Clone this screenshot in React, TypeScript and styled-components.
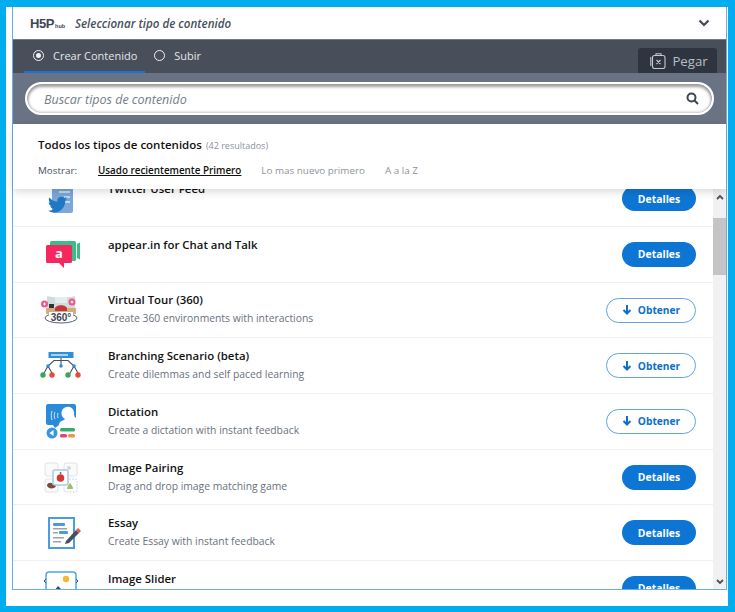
import styled, { createGlobalStyle } from "styled-components";

const Global = createGlobalStyle`
  html, body { margin: 0; padding: 0; background: #fff; }
  * { box-sizing: border-box; }
  body { font-family: "Open Sans", "Liberation Sans", sans-serif; color: #212121; }
`;

const Screen = styled.div`
  width: 735px;
  height: 612px;
  border: solid #00aef0;
  border-width: 7px 7px 6px 6px;
  background: #fff;
  padding: 0 1px 16px 6px;
  overflow: hidden;
`;

const Hub = styled.div`
  height: 583px;
  border: solid #6aaee4;
  border-width: 0 1px 1px 1px;
  display: flex;
  flex-direction: column;
  position: relative;
`;

const Header = styled.header`
  height: 32px;
  flex: none;
  background: #fff;
  display: flex;
  align-items: center;
  padding: 0 16px 0 17px;
`;

const Logo = styled.div`
  width: 45px;
  font-family: "Liberation Sans", sans-serif;
  font-weight: 700;
  font-size: 13px;
  letter-spacing: -0.4px;
  color: #3d4654;
  white-space: nowrap;
  span {
    font-size: 5.5px;
    letter-spacing: 0;
    margin-left: 1px;
  }
`;

const HeaderTitle = styled.div`
  flex: 1;
  font-size: 11.6px;
  font-style: italic;
  font-weight: 600;
  color: #47505e;
`;

const Tabs = styled.nav`
  height: 34px;
  flex: none;
  background: #484f5b;
  border-top: 1px solid #727986;
  display: flex;
  align-items: stretch;
  padding: 0 9px 0 11px;
`;

const Tab = styled.div<{ $active?: boolean }>`
  display: flex;
  align-items: center;
  gap: 9px;
  padding: 0 8px 0 9px;
  font-size: 11px;
  color: #e3e6ea;
  border-bottom: 2px solid ${(p) => (p.$active ? "#1a73d9" : "transparent")};
`;

const Radio = styled.span<{ $on?: boolean }>`
  width: 11px;
  height: 11px;
  border-radius: 50%;
  border: 1.5px solid #f0f2f4;
  display: flex;
  align-items: center;
  justify-content: center;
  &::after {
    content: "";
    width: 5px;
    height: 5px;
    border-radius: 50%;
    background: ${(p) => (p.$on ? "#f0f2f4" : "transparent")};
  }
`;

const PasteButton = styled.div`
  margin-left: auto;
  align-self: flex-end;
  width: 79px;
  height: 25px;
  background: #2f3540;
  border-radius: 3px 3px 0 0;
  color: #b9bec6;
  font-size: 13.2px;
  display: flex;
  align-items: center;
  justify-content: center;
  gap: 6px;
  padding: 1px 0 0 3px;
`;

const SearchBar = styled.div`
  height: 51px;
  flex: none;
  background: #697384;
  padding: 9px 12px 9px 12px;
`;

const SearchBox = styled.div`
  height: 33px;
  border-radius: 17px;
  border: 2px solid #fff;
  background: #fff;
  box-shadow: inset 0 2px 3px 1px rgba(0, 0, 0, 0.38), inset 0 -1px 3px rgba(0, 0, 0, 0.18);
  display: flex;
  align-items: center;
  justify-content: space-between;
  padding: 0 13px 0 17px;
`;

const Placeholder = styled.span`
  font-size: 12.5px;
  font-style: italic;
  color: #747c88;
  padding-top: 1px;
`;

const Filters = styled.section`
  height: 65px;
  flex: none;
  background: #fff;
  padding: 12px 25px 0;
  box-shadow: 0 3px 8px rgba(0, 0, 0, 0.14);
  position: relative;
  z-index: 1;
`;

const FiltersTitle = styled.div`
  font-size: 11.5px;
  font-weight: 600;
  color: #111;
  line-height: 18px;
  small {
    font-size: 9px;
    font-weight: 400;
    color: #8b919a;
    margin-left: 1px;
  }
`;

const FilterRow = styled.div`
  display: flex;
  margin-top: 8px;
  font-size: 9.85px;
  line-height: 15px;
  color: #8e939b;
`;

const FilterLabel = styled.span`
  width: 60px;
  color: #47505e;
`;

const FilterOption = styled.span<{ $active?: boolean }>`
  margin-right: 20px;
  color: ${(p) => (p.$active ? "#111" : "#8e939b")};
  font-weight: ${(p) => (p.$active ? 600 : 400)};
  text-decoration: ${(p) => (p.$active ? "underline" : "none")};
`;

const Body = styled.div`
  flex: 1;
  min-height: 0;
  display: flex;
  overflow: hidden;
`;

const List = styled.div`
  flex: 1;
  min-width: 0;
  overflow: hidden;
`;

const Rows = styled.div`
  margin-top: -17.7px;
`;

const Row = styled.div`
  height: 55.7px;
  border-bottom: 1px solid #eeeff1;
  display: flex;
  align-items: center;
  padding: 0 17px 0 27px;
`;

const IconCell = styled.div`
  width: 42px;
  height: 42px;
  flex: none;
  margin-right: 26px;
  display: flex;
  align-items: center;
  justify-content: center;
`;

const RowText = styled.div`
  flex: 1;
  align-self: flex-start;
  padding-top: 8.8px;
`;

const RowTitle = styled.div`
  font-size: 11.4px;
  font-weight: 600;
  line-height: 17px;
  color: #111;
`;

const RowDesc = styled.div`
  font-size: 10.35px;
  line-height: 15px;
  margin-top: 3px;
  color: #69717d;
`;

const DetailsButton = styled.div`
  width: 74px;
  height: 25px;
  border-radius: 13px;
  background: #0d76d4;
  color: #fff;
  font-size: 10.4px;
  font-weight: 700;
  display: flex;
  align-items: center;
  justify-content: center;
`;

const GetButton = styled.div`
  width: 90px;
  height: 25px;
  border-radius: 13px;
  border: 1px solid #5fa4e3;
  background: #fff;
  color: #0d6fc9;
  font-size: 10.2px;
  font-weight: 700;
  display: flex;
  align-items: center;
  justify-content: center;
  gap: 6px;
`;

const Scrollbar = styled.div`
  width: 13px;
  flex: none;
  background: #f1f1f1;
  display: flex;
  flex-direction: column;
  padding-top: 5px;
  align-items: center;
`;

const Arrow = styled.svg`
  flex: none;
`;

const Thumb = styled.div`
  width: 13px;
  height: 57px;
  margin-top: 18px;
  background: #c4c4c4;
`;

const ArrowBottom = styled(Arrow)`
  margin-top: auto;
  margin-bottom: 4px;
`;

const TWITTER =
  "M23.953 4.57a10 10 0 01-2.825.775 4.958 4.958 0 002.163-2.723c-.951.555-2.005.959-3.127 1.184a4.92 4.92 0 00-8.384 4.482C7.69 8.095 4.067 6.13 1.64 3.162a4.822 4.822 0 00-.666 2.475c0 1.71.87 3.213 2.188 4.096a4.904 4.904 0 01-2.228-.616v.06a4.923 4.923 0 003.946 4.827 4.996 4.996 0 01-2.212.085 4.936 4.936 0 004.604 3.417 9.867 9.867 0 01-6.102 2.105c-.39 0-.779-.023-1.17-.067a13.995 13.995 0 007.557 2.209c9.053 0 13.998-7.496 13.998-13.985 0-.21 0-.42-.015-.63A9.935 9.935 0 0024 4.59z";

const Tw = () => (
  <svg width="30" height="36" viewBox="0 0 30 36">
    <rect x="6" y="1" width="21" height="31" rx="2" fill="#7ba7da" />
    <path d="M10 6h14M13 11h11M18 16h6M19 21h5" stroke="#dce8f6" strokeWidth="1.600" />
    <g transform="translate(2 14) scale(0.8)">
      <path d={TWITTER} fill="#1f78c4" />
    </g>
  </svg>
);

const Appear = () => (
  <svg width="41" height="29" viewBox="-5 0 41 29">
    <rect x="4" y="1" width="26" height="20" rx="1.500" fill="#3bbd88" />
    <path d="M31 4l3-1.500v17L31 18z" fill="#3bbd88" />
    <path d="M1.500 5h23a1.500 1.500 0 0 1 1.500 1.500v15a1.500 1.500 0 0 1-1.500 1.500H18v5l-5-5H1.500A1.500 1.500 0 0 1 0 21.500v-15A1.500 1.500 0 0 1 1.500 5z" fill="#f4285e" />
    <text x="13" y="18" textAnchor="middle" fontFamily="Open Sans" fontWeight="700" fontSize="13" fill="#fff">a</text>
  </svg>
);

const Tour = () => (
  <svg width="40" height="28" viewBox="0 0 40 28">
    <path d="M6 0c9 2 19 2 28 0v14H6z" fill="#cfdcdc" />
    <rect x="14" y="2" width="12" height="5" fill="#e4ecec" />
    <rect x="5" y="12" width="30" height="6" fill="#d3ac80" />
    <path d="M14 13c0-5 12-5 12 0v2H14z" fill="#c5343f" />
    <rect x="8" y="8" width="5" height="4" fill="#333" />
    <circle cx="3.500" cy="8" r="3.500" fill="#f0548a" />
    <circle cx="31" cy="6" r="3.500" fill="#f0548a" />
    <path d="M2 8h3M3.500 6.500v3M29.500 6h3M31 4.500v3" stroke="#fff" strokeWidth="1" />
    <ellipse cx="20" cy="22" rx="16" ry="5" fill="none" stroke="#55606e" strokeWidth="1" />
    <rect x="8" y="16" width="24" height="9" fill="#fff" />
    <text x="20" y="24.500" textAnchor="middle" fontFamily="Liberation Sans" fontWeight="700" fontSize="10" fill="#3d4654">360°</text>
  </svg>
);

const Branch = () => (
  <svg width="42" height="27" viewBox="0 0 42 27">
    <rect x="8.500" y="0" width="25" height="6" fill="#2f8fd8" />
    <rect x="11" y="2" width="17" height="2" fill="#a7d3f2" />
    <path d="M21 6v8M21 8.500H14L8 14 3.500 22M21 8.500h7L34 14l4.500 8M8 14l4.500 8M34 14l-4.500 8" stroke="#47505e" strokeWidth="1.100" fill="none" />
    <circle cx="8" cy="14" r="1.800" fill="#2f8fd8" />
    <circle cx="21" cy="14" r="1.800" fill="#2f8fd8" />
    <circle cx="34" cy="14" r="1.800" fill="#2f8fd8" />
    <circle cx="3" cy="23" r="2.700" fill="#3aa655" />
    <circle cx="12" cy="23" r="2.700" fill="#e84b3c" />
    <circle cx="28" cy="23" r="2.700" fill="#3aa655" />
    <circle cx="38" cy="23" r="2.700" fill="#e84b3c" />
  </svg>
);

const Dictation = () => (
  <svg width="30" height="36" viewBox="0 0 30 36">
    <path d="M2 1h26a2 2 0 0 1 2 2v17a2 2 0 0 1-2 2H13l-4 3-2-3H2a2 2 0 0 1-2-2V3a2 2 0 0 1 2-2z" fill="#2a8bd8" />
    <path d="M13 22c0-4 4-4 6-6-4-2-5-8-1-11 5-3 10 0 10 5 0 2 0 4 2 5v7z" fill="#fff" />
    <path d="M6 8c-1 3-1 6 0 9M9 9c-1 2-1 5 0 7M12 10c-.5 1.500-.5 3.500 0 5" stroke="#cfe6f7" strokeWidth="1" fill="none" />
    <circle cx="6" cy="30" r="5.500" fill="#3a97dd" />
    <path d="M3.500 30l4-3v6z" fill="#fff" />
    <rect x="14" y="25" width="15" height="3.500" rx="1.500" fill="#3aa96f" />
    <rect x="14" y="31" width="7" height="3.500" rx="1.500" fill="#e0457a" />
    <rect x="22" y="31" width="7" height="3.500" rx="1.500" fill="#e8954b" />
  </svg>
);

const Pairing = () => (
  <svg width="34" height="31" viewBox="0 0 34 31">
    <rect x="1" y="1" width="13" height="13" rx="2" fill="#fafafa" stroke="#e0e2e5" />
    <rect x="20" y="1" width="13" height="13" rx="2" fill="#fafafa" stroke="#e0e2e5" />
    <rect x="1" y="17" width="13" height="13" rx="2" fill="#fafafa" stroke="#e0e2e5" />
    <rect x="20" y="17" width="13" height="13" rx="2" fill="#fff" stroke="#c4d8f0" strokeDasharray="2 1" />
    <path d="M3 23c1-3 6-3 6 0 3-1 4 2 1 3-3 1-7 0-7-3z" fill="#7a4c32" />
    <path d="M23 27c0-3 2-5 3-6 1 1 3 3 3 6z" fill="#9cc46c" />
    <circle cx="25" cy="6" r="2" fill="#d6d6d6" />
    <rect x="9" y="8" width="15" height="15" rx="2" fill="#fff" stroke="#a9c8ea" strokeWidth="1.500" />
    <circle cx="16.500" cy="16" r="3.800" fill="#d93636" />
    <path d="M16.500 12v-2" stroke="#4b8b3b" strokeWidth="1.500" />
  </svg>
);

const Essay = () => (
  <svg width="39" height="32" viewBox="-6 0 39 32">
    <rect x="1" y="1" width="25" height="30" fill="#fff" stroke="#4e9ade" strokeWidth="2" />
    <rect x="5" y="6" width="12" height="3" rx="1" fill="#4e9ade" />
    <rect x="5" y="11" width="14" height="1.500" fill="#9aa3ae" />
    <rect x="11" y="14" width="9" height="3" rx="1" fill="#4e9ade" />
    <rect x="5" y="15" width="5" height="1.500" fill="#9aa3ae" />
    <rect x="5" y="20" width="11" height="1.500" fill="#9aa3ae" />
    <rect x="5" y="24" width="8" height="1.500" fill="#9aa3ae" />
    <path d="M18 24l10-11 3 3-10 10-4 1z" fill="#47505e" />
    <path d="M28 13l2-2 3 3-2 2z" fill="#e0564f" />
  </svg>
);

const Slider = () => (
  <svg width="34" height="34" viewBox="0 0 34 34">
    <rect x="2" y="1" width="30" height="30" rx="3" fill="#fff" stroke="#4ea6e6" strokeWidth="1.500" />
    <circle cx="22" cy="8" r="3.200" fill="#f7b733" />
    <path d="M7 24l7-9 9 9z" fill="#2d4a6b" />
    <path d="M2 8l-2 2 2 2M32 8l2 2-2 2" stroke="#47505e" fill="none" />
  </svg>
);

const items = [
  { title: "Twitter User Feed", icon: <Tw />, action: "details" },
  { title: "appear.in for Chat and Talk", icon: <Appear />, action: "details" },
  { title: "Virtual Tour (360)", desc: "Create 360 environments with interactions", icon: <Tour />, action: "get" },
  { title: "Branching Scenario (beta)", desc: "Create dilemmas and self paced learning", icon: <Branch />, action: "get" },
  { title: "Dictation", desc: "Create a dictation with instant feedback", icon: <Dictation />, action: "get" },
  { title: "Image Pairing", desc: "Drag and drop image matching game", icon: <Pairing />, action: "details" },
  { title: "Essay", desc: "Create Essay with instant feedback", icon: <Essay />, action: "details" },
  { title: "Image Slider", desc: "Easily create an Image Slider", icon: <Slider />, action: "details" },
];

function App() {
  return (
    <>
      <Global />
      <Screen>
        <Hub>
          <Header>
            <Logo>
              H5P<span>hub</span>
            </Logo>
            <HeaderTitle>Seleccionar tipo de contenido</HeaderTitle>
            <svg width="12" height="8" viewBox="0 0 12 8">
              <path d="M1.500 1.500L6 6l4.500-4.500" fill="none" stroke="#3d4654" strokeWidth="2.200" />
            </svg>
          </Header>
          <Tabs>
            <Tab $active>
              <Radio $on />
              Crear Contenido
            </Tab>
            <Tab>
              <Radio />
              Subir
            </Tab>
            <PasteButton>
              <svg width="16" height="16" viewBox="0 0 16 16" fill="none" stroke="#c5c9cf" strokeWidth="1.100">
                <rect x="2.500" y="2.500" width="12.500" height="13" rx="2" />
                <path d="M.8 4v9M6 2.500V.8h5v1.700M6.500 7l4 4M10.500 7l-4 4" />
              </svg>
              Pegar
            </PasteButton>
          </Tabs>
          <SearchBar>
            <SearchBox>
              <Placeholder>Buscar tipos de contenido</Placeholder>
              <svg width="13" height="13" viewBox="0 0 13 13" fill="none" stroke="#3d4654" strokeWidth="2">
                <circle cx="5.500" cy="5.500" r="4" />
                <path d="M8.500 8.500L12 12" />
              </svg>
            </SearchBox>
          </SearchBar>
          <Filters>
            <FiltersTitle>
              Todos los tipos de contenidos <small>(42 resultados)</small>
            </FiltersTitle>
            <FilterRow>
              <FilterLabel>Mostrar:</FilterLabel>
              <FilterOption $active>Usado recientemente Primero</FilterOption>
              <FilterOption>Lo mas nuevo primero</FilterOption>
              <FilterOption>A a la Z</FilterOption>
            </FilterRow>
          </Filters>
          <Body>
            <List>
              <Rows>
                {items.map((item) => (
                  <Row key={item.title}>
                    <IconCell>{item.icon}</IconCell>
                    <RowText>
                      <RowTitle>{item.title}</RowTitle>
                      {item.desc && <RowDesc>{item.desc}</RowDesc>}
                    </RowText>
                    {item.action === "details" ? (
                      <DetailsButton>Detalles</DetailsButton>
                    ) : (
                      <GetButton>
                        <svg width="10" height="10" viewBox="0 0 10 10" fill="none" stroke="#0d6fc9" strokeWidth="2">
                          <path d="M5 0v8M1.500 5L5 8.500 8.500 5" />
                        </svg>
                        Obtener
                      </GetButton>
                    )}
                  </Row>
                ))}
              </Rows>
            </List>
            <Scrollbar>
              <Arrow width="8" height="6" viewBox="0 0 8 6">
                <path d="M1 5l3-3 3 3" fill="none" stroke="#505050" strokeWidth="1.800" />
              </Arrow>
              <Thumb />
              <ArrowBottom width="8" height="6" viewBox="0 0 8 6">
                <path d="M1 1l3 3 3-3" fill="none" stroke="#505050" strokeWidth="1.800" />
              </ArrowBottom>
            </Scrollbar>
          </Body>
        </Hub>
      </Screen>
    </>
  );
}

export default App;
